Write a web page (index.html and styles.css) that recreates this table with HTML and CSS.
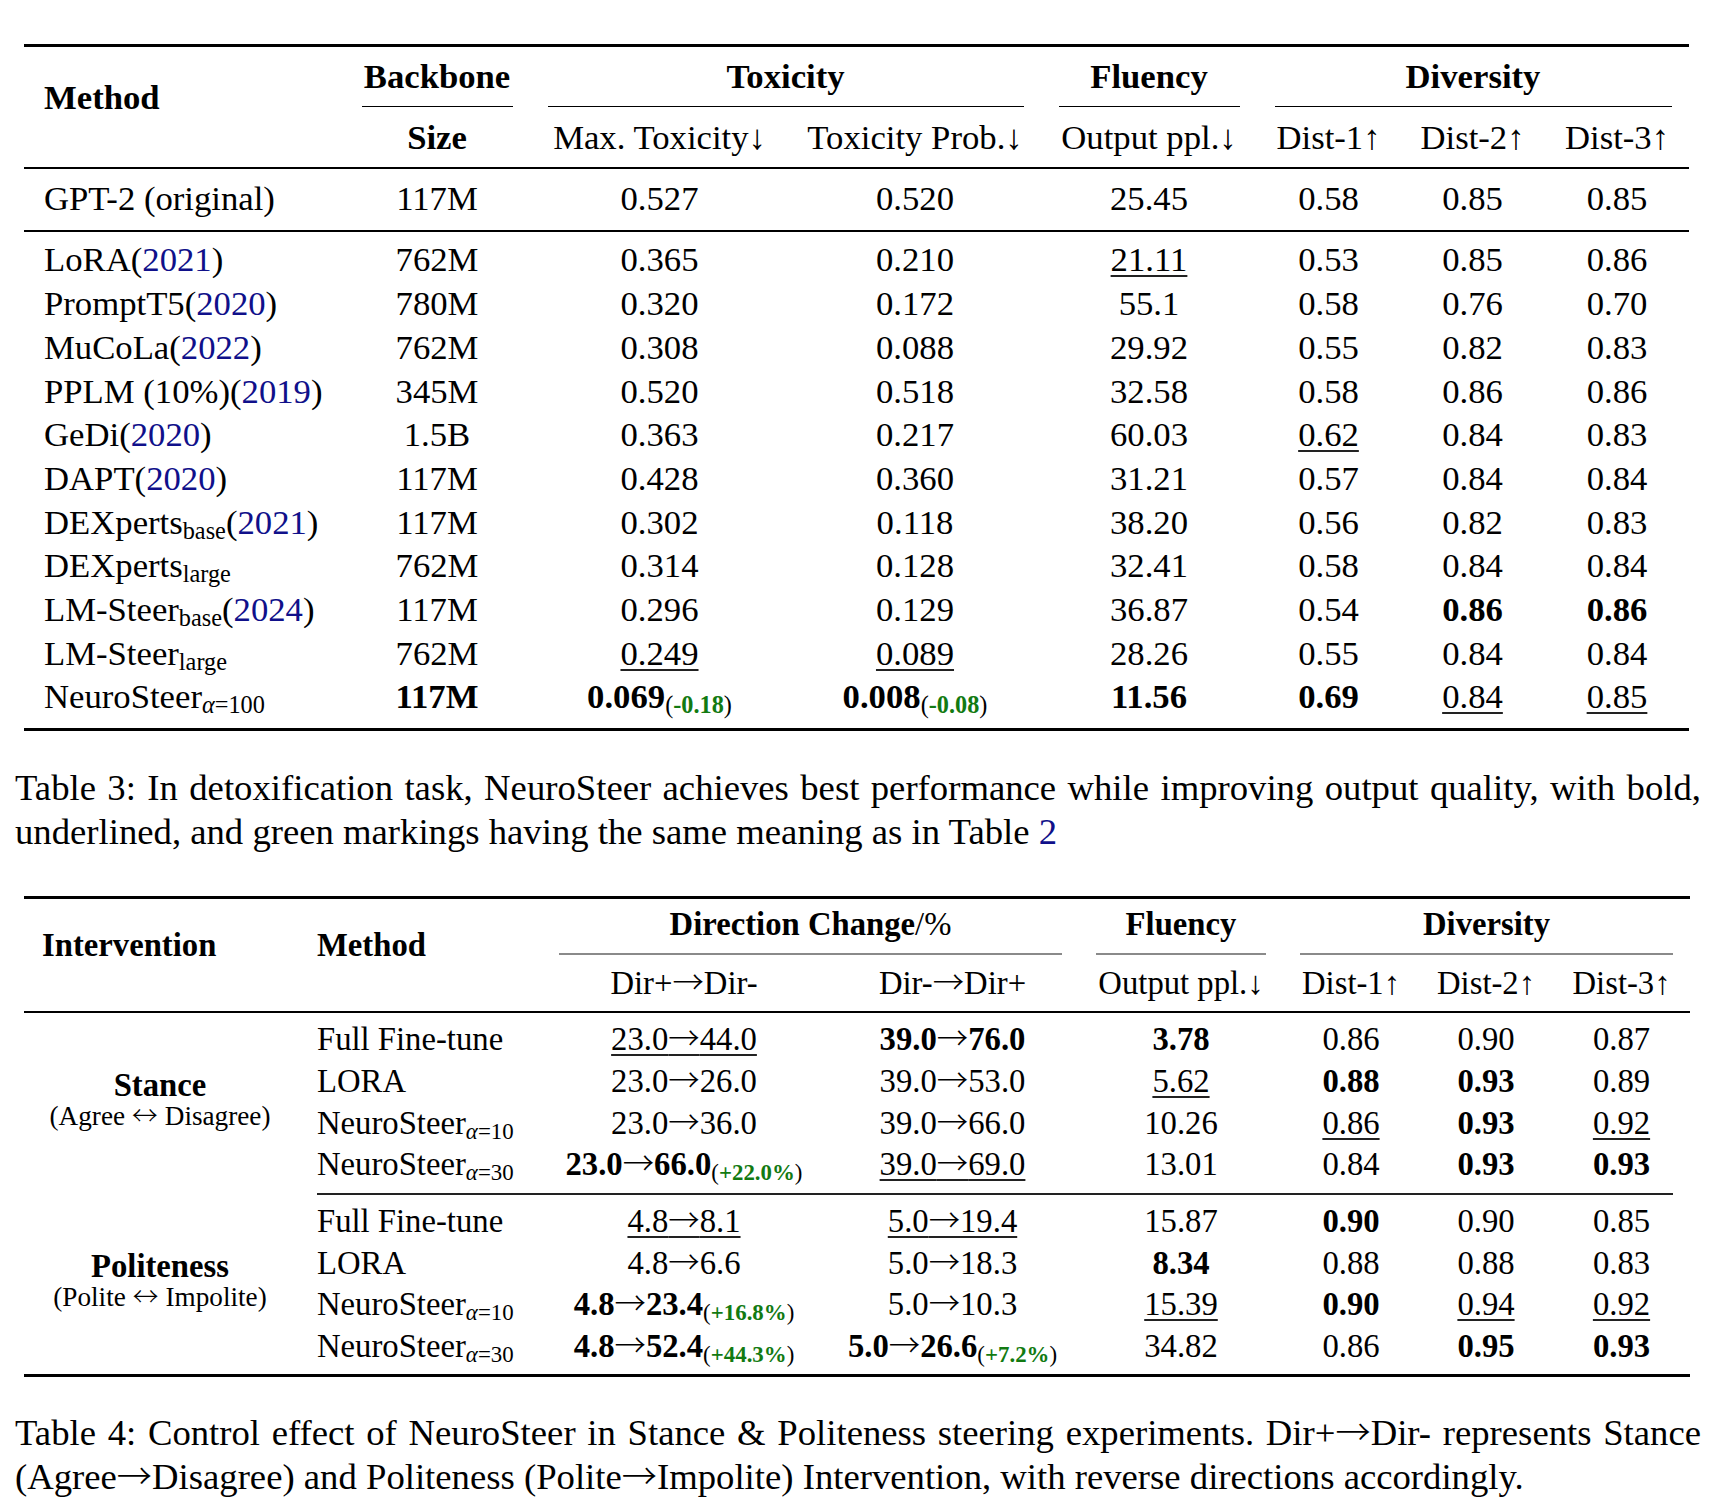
FILE: index.html
```html
<!DOCTYPE html>
<html lang="en">
<head>
<meta charset="utf-8">
<title>Tables 3 and 4</title>
<link rel="stylesheet" href="styles.css">
</head>
<body>
<main class="page">

  <section class="tbl t1">
    <div class="head">
      <div class="mh">Method</div>
      <div class="grp c2">Backbone</div>
      <div class="grp c34">Toxicity</div>
      <div class="grp c5">Fluency</div>
      <div class="grp c68">Diversity</div>
      <div class="sh b">Size</div>
      <div class="sh">Max. Toxicity<span class="ar">↓</span></div>
      <div class="sh">Toxicity Prob.<span class="ar">↓</span></div>
      <div class="sh">Output ppl.<span class="ar">↓</span></div>
      <div class="sh">Dist-1<span class="ar">↑</span></div>
      <div class="sh">Dist-2<span class="ar">↑</span></div>
      <div class="sh">Dist-3<span class="ar">↑</span></div>
    </div>

    <div class="sect base-row">
      <div class="row">
        <div class="l">GPT-2 (original)</div><div>117M</div><div>0.527</div><div>0.520</div><div>25.45</div><div>0.58</div><div>0.85</div><div>0.85</div>
      </div>
    </div>

    <div class="sect body1">
      <div class="row">
        <div class="l">LoRA(<span class="cite">2021</span>)</div><div>762M</div><div>0.365</div><div>0.210</div><div><span class="u">21.11</span></div><div>0.53</div><div>0.85</div><div>0.86</div>
      </div>
      <div class="row">
        <div class="l">PromptT5(<span class="cite">2020</span>)</div><div>780M</div><div>0.320</div><div>0.172</div><div>55.1</div><div>0.58</div><div>0.76</div><div>0.70</div>
      </div>
      <div class="row">
        <div class="l">MuCoLa(<span class="cite">2022</span>)</div><div>762M</div><div>0.308</div><div>0.088</div><div>29.92</div><div>0.55</div><div>0.82</div><div>0.83</div>
      </div>
      <div class="row">
        <div class="l">PPLM (10%)(<span class="cite">2019</span>)</div><div>345M</div><div>0.520</div><div>0.518</div><div>32.58</div><div>0.58</div><div>0.86</div><div>0.86</div>
      </div>
      <div class="row">
        <div class="l">GeDi(<span class="cite">2020</span>)</div><div>1.5B</div><div>0.363</div><div>0.217</div><div>60.03</div><div><span class="u">0.62</span></div><div>0.84</div><div>0.83</div>
      </div>
      <div class="row">
        <div class="l">DAPT(<span class="cite">2020</span>)</div><div>117M</div><div>0.428</div><div>0.360</div><div>31.21</div><div>0.57</div><div>0.84</div><div>0.84</div>
      </div>
      <div class="row">
        <div class="l">DEXperts<span class="sb">base</span>(<span class="cite">2021</span>)</div><div>117M</div><div>0.302</div><div>0.118</div><div>38.20</div><div>0.56</div><div>0.82</div><div>0.83</div>
      </div>
      <div class="row">
        <div class="l">DEXperts<span class="sb">large</span></div><div>762M</div><div>0.314</div><div>0.128</div><div>32.41</div><div>0.58</div><div>0.84</div><div>0.84</div>
      </div>
      <div class="row">
        <div class="l">LM-Steer<span class="sb">base</span>(<span class="cite">2024</span>)</div><div>117M</div><div>0.296</div><div>0.129</div><div>36.87</div><div>0.54</div><div class="b">0.86</div><div class="b">0.86</div>
      </div>
      <div class="row">
        <div class="l">LM-Steer<span class="sb">large</span></div><div>762M</div><div><span class="u">0.249</span></div><div><span class="u">0.089</span></div><div>28.26</div><div>0.55</div><div>0.84</div><div>0.84</div>
      </div>
      <div class="row">
        <div class="l">NeuroSteer<span class="sb"><i>α</i>=100</span></div><div class="b">117M</div><div><b>0.069</b><span class="sb">(<span class="gr">-0.18</span>)</span></div><div><b>0.008</b><span class="sb">(<span class="gr">-0.08</span>)</span></div><div class="b">11.56</div><div class="b">0.69</div><div><span class="u">0.84</span></div><div><span class="u">0.85</span></div>
      </div>
    </div>
  </section>

  <p class="cap cap3">
    <span class="line1">Table 3: In detoxification task, NeuroSteer achieves best performance while improving output quality, with bold,</span>
    <span class="line2">underlined, and green markings having the same meaning as in Table <span class="cite">2</span></span>
  </p>

  <section class="tbl t2">
    <div class="head">
      <div class="ih">Intervention</div>
      <div class="mh2">Method</div>
      <div class="grp c34">Direction Change<span class="nb">/%</span></div>
      <div class="grp c5">Fluency</div>
      <div class="grp c68">Diversity</div>
      <div class="sh c3">Dir+<span class="ar2">→</span>Dir-</div>
      <div class="sh">Dir-<span class="ar2">→</span>Dir+</div>
      <div class="sh">Output ppl.<span class="ar">↓</span></div>
      <div class="sh">Dist-1<span class="ar">↑</span></div>
      <div class="sh">Dist-2<span class="ar">↑</span></div>
      <div class="sh">Dist-3<span class="ar">↑</span></div>
    </div>

    <div class="body2">
      <div class="grouplabel g1">
        <div class="gname">Stance</div>
        <div class="gdesc">(Agree <span class="ar2">↔</span> Disagree)</div>
      </div>

      <div class="l">Full Fine-tune</div><div><span class="u">23.0<span class="ar2">→</span>44.0</span></div><div class="b">39.0<span class="ar2">→</span>76.0</div><div class="b">3.78</div><div>0.86</div><div>0.90</div><div>0.87</div>
      <div class="l">LORA</div><div>23.0<span class="ar2">→</span>26.0</div><div>39.0<span class="ar2">→</span>53.0</div><div><span class="u">5.62</span></div><div class="b">0.88</div><div class="b">0.93</div><div>0.89</div>
      <div class="l">NeuroSteer<span class="sb"><i>α</i>=10</span></div><div>23.0<span class="ar2">→</span>36.0</div><div>39.0<span class="ar2">→</span>66.0</div><div>10.26</div><div><span class="u">0.86</span></div><div class="b">0.93</div><div><span class="u">0.92</span></div>
      <div class="l">NeuroSteer<span class="sb"><i>α</i>=30</span></div><div><b>23.0<span class="ar2">→</span>66.0</b><span class="sb">(<span class="gr">+22.0%</span>)</span></div><div><span class="u">39.0<span class="ar2">→</span>69.0</span></div><div>13.01</div><div>0.84</div><div class="b">0.93</div><div class="b">0.93</div>

      <div class="grule"></div>

      <div class="grouplabel g2">
        <div class="gname">Politeness</div>
        <div class="gdesc">(Polite <span class="ar2">↔</span> Impolite)</div>
      </div>

      <div class="l">Full Fine-tune</div><div><span class="u">4.8<span class="ar2">→</span>8.1</span></div><div><span class="u">5.0<span class="ar2">→</span>19.4</span></div><div>15.87</div><div class="b">0.90</div><div>0.90</div><div>0.85</div>
      <div class="l">LORA</div><div>4.8<span class="ar2">→</span>6.6</div><div>5.0<span class="ar2">→</span>18.3</div><div class="b">8.34</div><div>0.88</div><div>0.88</div><div>0.83</div>
      <div class="l">NeuroSteer<span class="sb"><i>α</i>=10</span></div><div><b>4.8<span class="ar2">→</span>23.4</b><span class="sb">(<span class="gr">+16.8%</span>)</span></div><div>5.0<span class="ar2">→</span>10.3</div><div><span class="u">15.39</span></div><div class="b">0.90</div><div><span class="u">0.94</span></div><div><span class="u">0.92</span></div>
      <div class="l">NeuroSteer<span class="sb"><i>α</i>=30</span></div><div><b>4.8<span class="ar2">→</span>52.4</b><span class="sb">(<span class="gr">+44.3%</span>)</span></div><div><b>5.0<span class="ar2">→</span>26.6</b><span class="sb">(<span class="gr">+7.2%</span>)</span></div><div>34.82</div><div>0.86</div><div class="b">0.95</div><div class="b">0.93</div>
    </div>
  </section>

  <p class="cap cap4">
    <span class="line1">Table 4: Control effect of NeuroSteer in Stance &amp; Politeness steering experiments. Dir+<span class="ar2">→</span>Dir- represents Stance</span>
    <span class="line2">(Agree<span class="ar2">→</span>Disagree) and Politeness (Polite<span class="ar2">→</span>Impolite) Intervention, with reverse directions accordingly.</span>
  </p>

</main>
</body>
</html>
```

FILE: styles.css
```css
html, body {
  margin: 0;
  padding: 0;
  background: #ffffff;
}

body {
  font-family: "Liberation Serif", "Times New Roman", serif;
  color: #000000;
}

.page {
  padding-top: 44px;
  width: 1721px;
}

/* ---------- shared table pieces ---------- */
.tbl {
  margin-left: 24px;
  border-top: 3px solid #000;
  border-bottom: 3px solid #000;
}

.head {
  display: grid;
  grid-template-columns: var(--cols);
  border-bottom: 2px solid #000;
}

.row,
.body2 {
  display: grid;
  grid-template-columns: var(--cols);
}

.row > div,
.body2 > div {
  text-align: center;
  white-space: nowrap;
}

.row > .l,
.body2 > .l {
  text-align: left;
}

.grp {
  font-weight: bold;
  text-align: center;
  white-space: nowrap;
}

.sh {
  text-align: center;
  white-space: nowrap;
}

.b, b {
  font-weight: bold;
}

.c2 { grid-column: 2; }
.c34 { grid-column: 3 / 5; }
.c5 { grid-column: 5; }
.c68 { grid-column: 6 / 9; }
.c3 { grid-column: 3; }

.cite { color: #10108a; }
.gr { color: #127a12; font-weight: bold; }

.u {
  text-decoration: underline;
  text-decoration-thickness: 1.5px;
  text-underline-offset: 4px;
  text-decoration-color: #222;
}

.sb {
  font-size: 0.7em;
  vertical-align: -5px;
  line-height: 0;
  font-weight: normal;
}

.ar { font-weight: normal; }
.nb { font-weight: normal; }

/* long, thin math-style arrows (\rightarrow, \leftrightarrow) */
.ar2 {
  font-family: "Noto Sans CJK JP", "Liberation Serif", serif;
  font-weight: 300;
  font-size: 0.96em;
  line-height: 0;
}

/* ---------- Table 3 ---------- */
.t1 {
  --cols: 320px 186px 259px 252px 216px 143px 145px 144px;
  width: 1665px;
  font-size: 34.7px;
}

.t1 .mh {
  grid-column: 1;
  grid-row: 1 / 3;
  font-weight: bold;
  padding-top: 29px;
  padding-left: 20px;
  line-height: 43.6px;
}

.t1 .grp {
  margin: 0 17.5px;
  padding: 8px 0 7px;
  line-height: 43.6px;
  border-bottom: 1px solid #000;
}

.t1 .sh {
  grid-row: 2;
  padding: 9px 0 8px;
  line-height: 43.6px;
}

.t1 .sh.b { grid-column: 2; }

.t1 .row {
  line-height: 43.7px;
}

.t1 .row > .l {
  padding-left: 20px;
}

.base-row {
  padding: 8px 0 9.5px;
  border-bottom: 2px solid #000;
}

.body1 {
  padding: 6px 0 9px;
}

/* ---------- captions ---------- */
.cap {
  margin: 35px 0 0 15px;
  width: 1686px;
  font-size: 36.7px;
  line-height: 44px;
}

.cap .line1 {
  display: block;
  text-align: justify;
  text-align-last: justify;
}

.cap .line2 {
  display: block;
}

.cap4 {
  margin-top: 34px;
}

/* ---------- Table 4 ---------- */
.t2 {
  --cols: 272px 246px 284px 253px 204px 136px 134px 137px;
  width: 1666px;
  margin-top: 42px;
  font-size: 32.7px;
}

.t2 .ih,
.t2 .mh2 {
  grid-row: 1 / 3;
  font-weight: bold;
  padding-top: 25.4px;
  line-height: 41.3px;
}

.t2 .ih {
  grid-column: 1;
  padding-left: 18px;
}

.t2 .mh2 {
  grid-column: 2;
  padding-left: 21px;
}

.t2 .grp {
  margin: 0 17px;
  padding: 4.4px 0 8.3px;
  line-height: 41.3px;
  border-bottom: 2px solid #8a8a8a;
}

.t2 .sh {
  grid-row: 2;
  padding: 7.4px 0 7.3px;
  line-height: 41.3px;
}

.body2 {
  padding: 6.4px 0 6.4px;
  line-height: 41.6px;
}

.body2 > .l {
  padding-left: 21px;
}

.grouplabel {
  grid-column: 1;
  display: flex;
  flex-direction: column;
  justify-content: center;
  align-items: center;
}

.g1 { grid-row: 1 / 5; padding-bottom: 4px; }
.g2 { grid-row: 6 / 10; padding-bottom: 4px; }

.gname {
  font-weight: bold;
  line-height: 31px;
}

.gdesc {
  font-size: 27.2px;
  line-height: 31px;
}

.grule {
  grid-column: 2 / 9;
  margin: 7.4px 17px 6px 21px;
  border-top: 2px solid #222;
}
```
